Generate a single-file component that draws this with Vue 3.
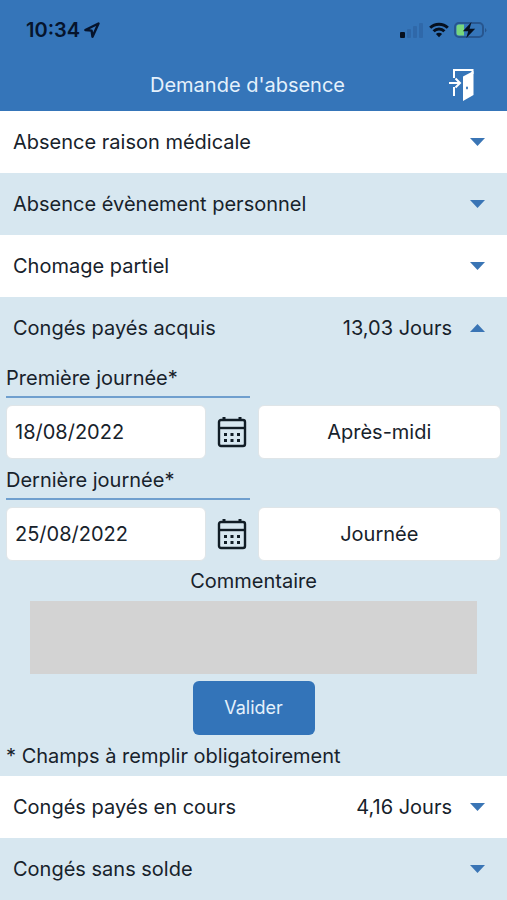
<template>
  <div class="page">
    <header>
      <div class="status_bar">
        <span class="clock">10:34</span>
        <svg class="location" viewBox="0 0 16 16" aria-hidden="true">
          <path d="M1.3 8 14.5 1.5 8.5 14.7 7.6 8.6Z" />
        </svg>
        <div class="status_icons">
          <svg class="signal" viewBox="0 0 24 16" aria-hidden="true">
            <rect class="on" x="0" y="10" width="5" height="6" rx="1" />
            <rect x="7" y="7" width="4" height="9" rx="1" />
            <rect x="13" y="4" width="4" height="12" rx="1" />
            <rect x="19" y="1" width="4" height="15" rx="1" />
          </svg>
          <svg class="wifi" viewBox="0 0 20 16" aria-hidden="true">
            <path d="M1.2 5.8a12.5 12.5 0 0 1 17.6 0M4.6 9.3a7.6 7.6 0 0 1 10.8 0" />
            <path class="dot" d="M10 15.2 6.9 12.1a4.4 4.4 0 0 1 6.2 0Z" />
          </svg>
          <svg class="battery" viewBox="0 0 34 18" aria-hidden="true">
            <rect class="case" x="1" y="2" width="28" height="14" rx="4" />
            <path class="tip" d="M31 7v4.5a2.5 2.5 0 0 0 0-4.5Z" />
            <path class="level" d="M5 3.5h5v11H5A2.5 2.5 0 0 1 2.5 12V6A2.5 2.5 0 0 1 5 3.5Z" />
            <path class="bolt" d="M17.5 1 8.8 10.2h5.4L12.3 17l8.900-9.200h-5.600Z" />
          </svg>
        </div>
      </div>
      <div class="title_bar">
        <h1>Demande d'absence</h1>
        <button class="exit" type="button" aria-label="Quitter">
          <svg viewBox="0 0 28 34" aria-hidden="true">
            <path class="frame" d="M7 10V2h18.500v4M7 19v9" />
            <path class="arrow" d="M2 15h10M8.500 10.500 13 15l-4.500 4.500" />
            <path class="door" fill-rule="evenodd" d="M16 8.500 26.500 3v24L16 33ZM19 20a1 1.400 0 1 0 2 0 1 1.400 0 1 0-2 0Z" />
          </svg>
        </button>
      </div>
    </header>

    <main>
      <section v-for="item in absences" :key="item.id" class="absence">
        <button class="row" type="button" :aria-expanded="opened === item.id" @click="toggle(item.id)">
          <span class="name">{{ item.name }}</span>
          <span v-if="item.days" class="days">{{ item.days }} Jours</span>
          <svg class="caret" :class="{ up: opened === item.id }" viewBox="0 0 15 8" aria-hidden="true">
            <path d="M0 0h15L7.5 8Z" />
          </svg>
        </button>

        <form v-if="opened === item.id" @submit.prevent>
          <div v-for="day in days" :key="day.id" class="field">
            <label :for="day.id">{{ day.label }}</label>
            <div class="date">
              <input :id="day.id" v-model="day.date" type="text">
              <button class="calendar" type="button" aria-label="Choisir une date">
                <svg viewBox="0 0 30 32" aria-hidden="true">
                  <rect class="line" x="2" y="4" width="26" height="26" rx="2" />
                  <path class="line" d="M2 12h26" />
                  <path class="peg" d="M7 1v4M23 1v4" />
                  <path class="dots" d="M7 17h3v3H7zM13.5 17h3v3h-3zM20 17h3v3h-3zM7 23h3v3H7zM13.5 23h3v3h-3zM20 23h3v3h-3z" />
                </svg>
              </button>
            </div>
            <select v-model="day.period" :aria-label="'Période, ' + day.label">
              <option v-for="period in periods" :key="period">{{ period }}</option>
            </select>
          </div>
          <label class="comment_label" for="comment">Commentaire</label>
          <textarea id="comment" v-model="comment"></textarea>
          <button class="submit" type="submit">Valider</button>
          <p class="note">* Champs à remplir obligatoirement</p>
        </form>
      </section>
    </main>
  </div>
</template>

<script setup>
import { ref } from 'vue'

const absences = [
  { id: 'medical', name: 'Absence raison médicale' },
  { id: 'personal', name: 'Absence évènement personnel' },
  { id: 'partial', name: 'Chomage partiel' },
  { id: 'acquired', name: 'Congés payés acquis', days: '13,03' },
  { id: 'current', name: 'Congés payés en cours', days: '4,16' },
  { id: 'unpaid', name: 'Congés sans solde' }
]
const periods = ['Journée', 'Matin', 'Après-midi']

const opened = ref('acquired')
const comment = ref('')
const days = ref([
  { id: 'first_day', label: 'Première journée*', date: '18/08/2022', period: 'Après-midi' },
  { id: 'last_day', label: 'Dernière journée*', date: '25/08/2022', period: 'Journée' }
])

const toggle = (id) => {
  opened.value = opened.value === id ? null : id
}
</script>

<style>
body {
  margin: 0;
  background: #fff;
}
</style>

<style scoped>
.page {
  font-family: Inter, "Liberation Sans", sans-serif;
  font-size: 20px;
  line-height: 24px;
  color: #17222b;
}

button,
input,
select,
textarea {
  box-sizing: border-box;
  margin: 0;
  padding: 0;
  border: 0;
  border-radius: 0;
  background: none;
  font: inherit;
  color: inherit;
}

svg {
  display: block;
}

header {
  background: #3575b9;
}

.status_bar {
  display: flex;
  align-items: center;
  height: 59px;
  padding: 0 19px 0 26px;
  color: #06142c;
}

.clock {
  font-weight: 600;
}

.location {
  width: 16px;
  height: 16px;
  margin-left: 4px;
  fill: none;
  stroke: #06142c;
  stroke-width: 2.4;
  stroke-linejoin: round;
}

.status_icons {
  display: flex;
  align-items: center;
  gap: 5px;
  margin-left: auto;
}

.signal {
  width: 24px;
  height: 16px;
  fill: #2f68a9;
}

.signal .on {
  fill: #06101f;
}

.wifi {
  width: 20px;
  height: 16px;
  fill: none;
  stroke: #06101f;
  stroke-width: 3;
}

.wifi .dot {
  fill: #06101f;
  stroke: none;
}

.battery {
  width: 34px;
  height: 18px;
}

.case {
  fill: none;
  stroke: #27568f;
  stroke-width: 2;
}

.tip {
  fill: #27568f;
}

.level {
  fill: #77d67c;
}

.bolt {
  fill: #06101f;
}

.title_bar {
  display: grid;
  grid-template-columns: 1fr auto 1fr;
  align-items: center;
  height: 52px;
  padding: 0 32px 0 20px;
}

h1 {
  grid-column: 2;
  margin: 0;
  font-size: 20px;
  font-weight: 400;
  color: #e4f1fc;
}

.exit {
  justify-self: end;
}

.exit svg {
  width: 28px;
  height: 34px;
}

.frame,
.arrow {
  fill: none;
  stroke: #fff;
  stroke-width: 2;
}

.door {
  fill: #fff;
}

.absence:nth-child(even) {
  background: #d7e7f0;
}

.row {
  display: flex;
  align-items: center;
  gap: 18px;
  width: 100%;
  height: 62px;
  padding: 0 22px 0 13px;
  text-align: left;
}

.name {
  flex: 1;
}

.caret {
  width: 15px;
  height: 8px;
  fill: #3a75b5;
}

.caret.up {
  transform: rotate(180deg);
}

form {
  display: flex;
  flex-direction: column;
  gap: 2px;
  padding: 0 6px;
}

.field {
  display: grid;
  grid-template-columns: 1fr 1fr;
  gap: 7px 8px;
}

.field label {
  box-sizing: border-box;
  grid-column: 1;
  height: 39px;
  border-bottom: 2px solid #6f9fce;
  line-height: 38px;
}

.date {
  display: flex;
  gap: 8px;
  grid-column: 1;
}

input,
select {
  width: 100%;
  min-width: 0;
  height: 54px;
  border: 1px solid #dfe5e8;
  border-radius: 6px;
  background: #fff;
}

input {
  flex: 1;
  padding: 0 8px;
}

select {
  appearance: none;
  text-align: center;
  text-align-last: center;
}

.calendar {
  display: flex;
  align-items: center;
  justify-content: center;
  width: 36px;
}

.calendar svg {
  width: 30px;
  height: 32px;
}

.line,
.peg {
  fill: none;
  stroke: #111d26;
  stroke-width: 2.4;
}

.peg {
  stroke-width: 3;
}

.dots {
  fill: #111d26;
}

.comment_label {
  line-height: 36px;
  text-align: center;
}

textarea {
  height: 73px;
  margin: 0 24px;
  padding: 8px;
  background: #d3d3d3;
  resize: none;
}

.submit {
  align-self: center;
  width: 122px;
  height: 54px;
  margin-top: 5px;
  border-radius: 6px;
  background: #3374b9;
  font-size: 18px;
  color: #e4f1fc;
}

.note {
  margin: 0;
  line-height: 39px;
}
</style>
